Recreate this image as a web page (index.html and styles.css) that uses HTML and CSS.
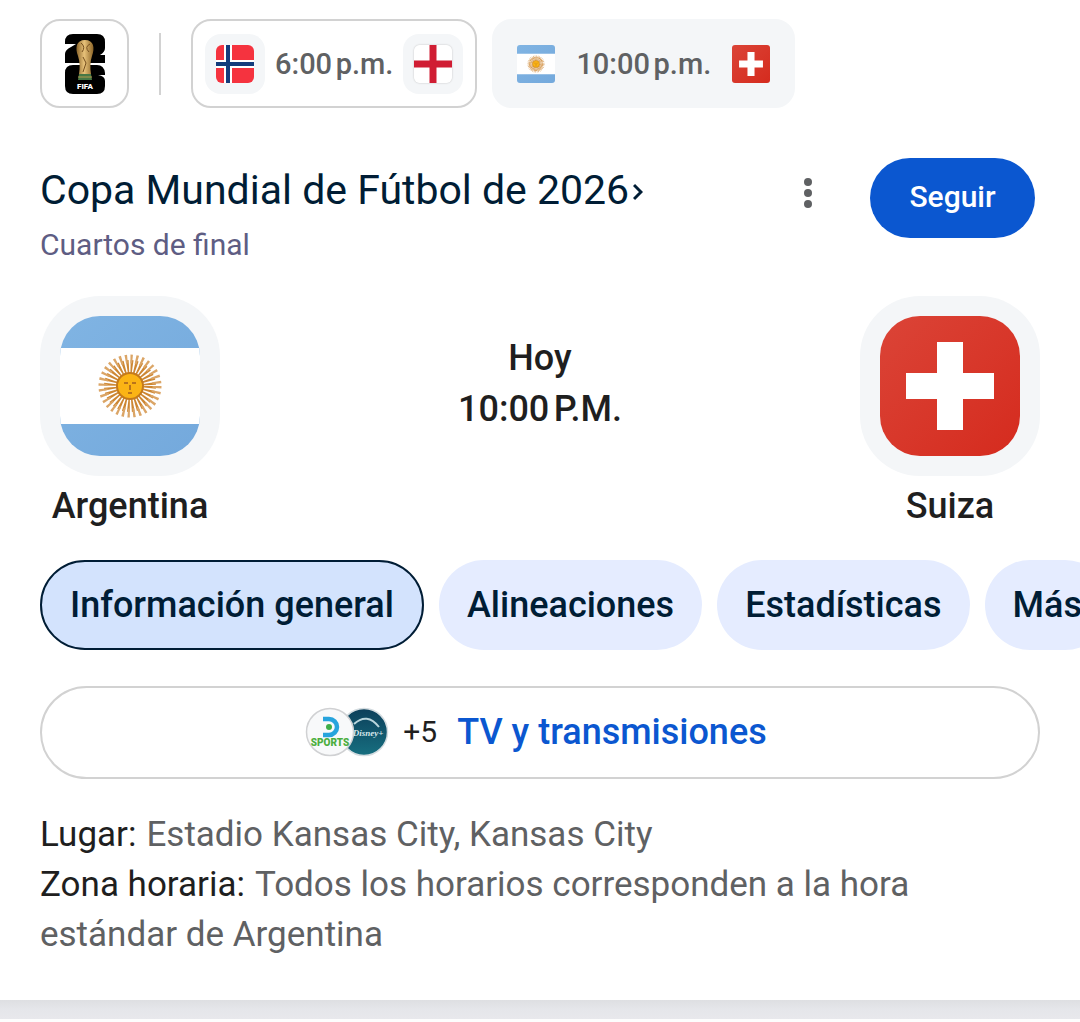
FILE: index.html
```html
<!DOCTYPE html>
<html lang="es">
<head>
<meta charset="utf-8">
<meta name="viewport" content="width=device-width, initial-scale=1">
<title>Argentina - Suiza</title>
<link rel="stylesheet" href="styles.css">
</head>
<body>
<svg width="0" height="0" class="defs" aria-hidden="true">
  <defs>
    <linearGradient id="sky" x1="0" y1="0" x2="1" y2="1"><stop offset="0" stop-color="#80b4e3"/><stop offset="1" stop-color="#74a9dc"/></linearGradient>
    <linearGradient id="red" x1="0" y1="0" x2="1" y2="1"><stop offset="0" stop-color="#db4437"/><stop offset="1" stop-color="#d52b1e"/></linearGradient>
    <linearGradient id="gold" x1="0" y1="0" x2="1" y2="0"><stop offset="0" stop-color="#8a6429"/><stop offset=".45" stop-color="#e8c27a"/><stop offset="1" stop-color="#8d6527"/></linearGradient>
    <linearGradient id="teal" x1="0" y1="0" x2="0" y2="1"><stop offset="0" stop-color="#0c3f5a"/><stop offset="1" stop-color="#176f80"/></linearGradient>
    <symbol id="argentina" viewBox="0 0 140 140">
      <path fill="url(#sky)" d="M0 0h140v140H0z"/>
      <path fill="#fff" d="M0 32h140v76H0z"/>
      <circle cx="70" cy="70" r="19" fill="none" stroke="#cd8733" stroke-width="14" stroke-dasharray="2.1 1.63"/>
      <circle cx="70" cy="70" r="27" fill="none" stroke="#dba566" stroke-width="9" stroke-dasharray="2.2 3.1"/>
      <circle cx="70" cy="70" r="13" fill="#fbb415" stroke="#c47a1c" stroke-width="2"/>
      <path d="M64 67h4M72 67h4M70 69v5M68 77h4" stroke="#b9741b" stroke-width="2" fill="none"/>
    </symbol>
    <symbol id="suiza" viewBox="0 0 140 140">
      <path fill="url(#red)" d="M0 0h140v140H0z"/>
      <path fill="#fff" d="M57 26h26v31h31v26H83v31H57V83H26V57h31z"/>
    </symbol>
  </defs>
</svg>

<main class="card">
  <nav class="matches" aria-label="Partidos">
    <a class="chip chip-logo" href="#copa" aria-label="Copa Mundial">
      <svg class="cup" viewBox="0 0 42 62">
        <path fill="#000" d="M9 1h24q8 0 8 8v6q0 4-5 7h5v8H1v-9q0-4 6-7l5-3H1V9q0-8 8-8zM9 32h24q7 0 8 8v2h-7q7 1 7 6v5q0 8-8 8H9q-8 0-8-8V40q0-8 8-8z"/>
        <path fill="url(#gold)" d="M21 7c9 0 10 8 7 16-2 6-2 12-1 18H15c1-6 1-12-1-18-3-8-2-16 7-16z"/>
        <path d="M17 10q5 4 1 9M26 11q-6 3-1 8M19 24l3 6-3 9" stroke="#765020" fill="none"/>
        <path fill="#477846" d="M15 41h12l1 6H14z"/>
        <path d="M14 44h14" stroke="#b59a4d"/>
        <text class="cup-text" x="21" y="56" text-anchor="middle">FIFA</text>
      </svg>
    </a>
    <span class="divider"></span>
    <a class="chip" href="#p1">
      <span class="badge"><svg class="flag flag-round" viewBox="0 0 38 38"><path fill="#f5333f" d="M0 0h38v38H0z"/><path d="M12 0v38M0 19h38" stroke="#fff" stroke-width="8"/><path d="M12 0v38M0 19h38" stroke="#143c7c" stroke-width="4"/></svg></span>
      <span class="time">6:00&#8239;p.m.</span>
      <span class="badge"><svg class="flag flag-round flag-edge" viewBox="0 0 38 38"><path fill="#fff" d="M0 0h38v38H0z"/><path d="M19 0v38M0 19h38" stroke="#d01d33" stroke-width="7"/></svg></span>
    </a>
    <a class="chip chip-current" href="#p2" aria-current="true">
      <span class="badge"><svg class="flag"><use href="#argentina"/></svg></span>
      <span class="time">10:00&#8239;p.m.</span>
      <span class="badge"><svg class="flag"><use href="#suiza"/></svg></span>
    </a>
  </nav>

  <header class="header">
    <div class="heading">
      <h1 class="title"><a href="#copa">Copa Mundial de Fútbol de 2026<svg class="chevron" viewBox="0 0 10 18"><path d="M1 2l7 7-7 7" fill="none" stroke="currentColor" stroke-width="3"/></svg></a></h1>
      <p class="stage">Cuartos de final</p>
    </div>
    <button class="more" type="button" aria-label="Más opciones"><svg viewBox="0 0 8 32" width="8" height="32"><g fill="#5f6163"><circle cx="4" cy="5" r="4"/><circle cx="4" cy="16" r="4"/><circle cx="4" cy="27" r="4"/></g></svg></button>
    <button class="follow" type="button">Seguir</button>
  </header>

  <section class="score">
    <div class="team"><span class="crest"><svg class="crest-flag"><use href="#argentina"/></svg></span><span class="name">Argentina</span></div>
    <p class="kickoff">Hoy<br>10:00&#8239;P.M.</p>
    <div class="team"><span class="crest"><svg class="crest-flag"><use href="#suiza"/></svg></span><span class="name">Suiza</span></div>
  </section>

  <nav class="tabs" aria-label="Secciones">
    <button class="tab tab-active" type="button">Información general</button>
    <button class="tab" type="button">Alineaciones</button>
    <button class="tab" type="button">Estadísticas</button>
    <button class="tab" type="button">Más</button>
  </nav>

  <a class="tv" href="#tv">
    <svg class="channels" viewBox="0 0 84 50">
      <circle cx="59" cy="25" r="23.500" fill="url(#teal)" stroke="#d4dce0" stroke-width="1.500"/>
      <path d="M49 17q13-12 25 3" fill="none" stroke="#b9d5dc" stroke-width="2"/>
      <text class="disney" x="63" y="29" text-anchor="middle">Disney+</text>
      <circle cx="25" cy="25" r="23.500" fill="#f8f9fa" stroke="#d0d1d3" stroke-width="1.500"/>
      <path d="M18 12h6a8 8 0 0 1 0 16h-6" fill="none" stroke="#27a4dd" stroke-width="4.500"/>
      <circle cx="24" cy="20" r="3" fill="#3fae49"/>
      <text class="sports" x="25" y="39" text-anchor="middle">SPORTS</text>
    </svg>
    <span class="extra">+5</span>
    <span class="tv-label">TV y transmisiones</span>
  </a>

  <div class="info">
    <p><span class="key">Lugar:</span>Estadio Kansas City, Kansas City</p>
    <p><span class="key">Zona horaria:</span>Todos los horarios corresponden a la hora estándar de Argentina</p>
  </div>
</main>
<div class="gap"></div>
</body>
</html>
```
FILE: styles.css
```css
* { box-sizing: border-box; }
body { margin: 0; background: #fdfdfd; color: #1f1f1f; font-family: Roboto, "Liberation Sans", sans-serif; }
h1, p { margin: 0; }
a { color: inherit; text-decoration: none; }
button { font: inherit; border: 0; cursor: pointer; }
svg { display: block; flex: none; }
.defs { position: absolute; }

.card { background: #fff; padding: 19px 40px 40px; overflow: hidden; }

.matches { display: flex; align-items: center; }
.chip { display: flex; align-items: center; height: 89px; padding: 0 12px; gap: 10px; border: 2px solid #d2d2d2; border-radius: 20px; }
.chip-logo { width: 89px; padding: 0; justify-content: center; }
.chip-current { margin-left: 15px; border-color: #f4f6f8; background: #f4f6f8; }
.cup { width: 42px; height: 62px; }
.cup-text { font-size: 8px; font-weight: 900; fill: #fff; }
.divider { width: 2px; height: 62px; margin: 0 30px; background: #d2d2d2; }
.badge { display: grid; place-items: center; width: 60px; height: 60px; border-radius: 16px; background: #f4f6f8; }
.flag { width: 38px; height: 38px; border-radius: 3px; }
.flag-round { border-radius: 6px; }
.flag-edge { box-shadow: 0 0 2px #bbb; }
.time { font-size: 29px; font-weight: 500; color: #5f6163; white-space: nowrap; }

.header { display: flex; align-items: flex-start; margin-top: 50px; padding-right: 5px; }
.heading { flex: 1; }
.title { font-size: 41px; line-height: 64px; font-weight: 400; color: #001d35; }
.title a { display: flex; align-items: center; gap: 4px; }
.chevron { width: 10px; height: 18px; margin-top: 4px; }
.stage { font-size: 30px; line-height: 46px; color: #5e5d83; }
.more { margin: 19px 58px 0 0; padding: 0; background: none; }
.follow { width: 165px; height: 80px; padding: 0 0 4px; border-radius: 40px; background: #0b57d0; color: #fff; font-size: 30px; font-weight: 500; }

.score { display: flex; justify-content: space-between; margin-top: 28px; }
.team { display: flex; flex-direction: column; align-items: center; width: 180px; }
.crest { display: grid; place-items: center; width: 180px; height: 180px; border-radius: 60px; background: #f4f6f8; }
.crest-flag { width: 140px; height: 140px; border-radius: 40px; }
.name { font-size: 36px; line-height: 60px; font-weight: 500; }
.kickoff { padding-top: 37px; text-align: center; font-size: 36px; line-height: 51px; font-weight: 500; }

.tabs { display: flex; gap: 15px; margin: 24px -40px 0 0; overflow: hidden; }
.tab { flex: none; height: 90px; padding: 0 28px; border-radius: 45px; background: #e5ecff; color: #001d35; font-size: 36px; font-weight: 500; }
.tab-active { border: 2px solid #001d35; background: #d3e3fd; }

.tv { display: flex; align-items: center; justify-content: center; height: 93px; margin-top: 36px; padding: 0 8px 2px 0; border: 2px solid #d2d2d2; border-radius: 47px; }
.channels { width: 84px; height: 50px; }
.disney { font: italic 700 9px "Liberation Serif", serif; fill: #d7e7eb; }
.sports { font-size: 10px; font-weight: 900; fill: #4cae3f; }
.extra { margin: 0 20px 0 14px; font-size: 30px; }
.tv-label { color: #0b57d0; font-size: 36px; font-weight: 500; }

.info { margin-top: 31px; font-size: 35px; line-height: 50px; color: #5f6163; }
.key { margin-right: 10px; color: #1f1f1f; }

.gap { height: 19px; background: linear-gradient(#dedfe2, #e5e6ea 50%, #e8e8ec); }
```
